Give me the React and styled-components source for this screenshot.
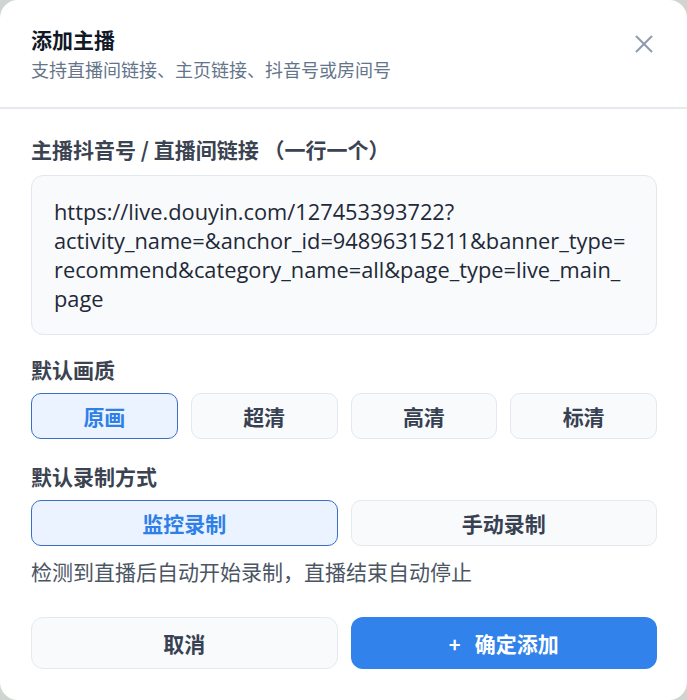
import React, { useState } from "react";
import styled, { createGlobalStyle } from "styled-components";

const Global = createGlobalStyle`
  html, body { margin: 0; padding: 0; background: #cfd6d2; }
  body { font-family: "Noto Sans CJK SC", "Noto Sans", sans-serif; }
  * { box-sizing: border-box; }
`;

const Card = styled.div`
  width: 687px;
  height: 700px;
  background: #ffffff;
  border-radius: 18px;
  overflow: hidden;
  display: flex;
  flex-direction: column;
`;

const Header = styled.div`
  display: flex;
  justify-content: space-between;
  align-items: flex-start;
  padding: 25px 34px 0 31px;
  height: 109px;
  flex-shrink: 0;
  border-bottom: 2px solid #e6e9ee;
`;

const HeaderText = styled.div`
  display: flex;
  flex-direction: column;
  gap: 4px;
`;

const Title = styled.div`
  font-size: 21px;
  font-weight: 700;
  color: #111827;
  line-height: 28px;
`;

const Subtitle = styled.div`
  font-size: 18px;
  color: #64748b;
  line-height: 24px;
`;

const CloseBtn = styled.button`
  border: none;
  background: none;
  padding: 0;
  margin-top: 10px;
  width: 18px;
  height: 18px;
  display: flex;
  align-items: center;
  justify-content: center;
  color: #8e9bab;
  cursor: pointer;
`;

const Body = styled.div`
  display: flex;
  flex-direction: column;
  padding: 27px 30px 0 31px;
`;

const Label = styled.div`
  font-size: 21px;
  font-weight: 700;
  color: #3b4351;
  line-height: 26px;
  margin-top: ${(p) => p.$mt || 0}px;
  margin-bottom: ${(p) => p.$mb || 11}px;
`;

const TextArea = styled.textarea`
  width: 100%;
  height: 160px;
  resize: none;
  background: #f8fafc;
  border: 1px solid #e2e8f0;
  border-radius: 12px;
  padding: 21px 24px 21px 22px;
  font-family: "Open Sans", "Noto Sans", sans-serif;
  font-size: 21.8px;
  line-height: 29px;
  color: #1f2937;
  outline: none;
  overflow: hidden;
`;

const Grid = styled.div`
  display: grid;
  grid-template-columns: repeat(${(p) => p.$cols}, 1fr);
  gap: 13px;
`;

const Option = styled.button`
  height: 46px;
  border-radius: 10px;
  font-family: "Noto Sans CJK SC", sans-serif;
  font-size: 21px;
  font-weight: 700;
  cursor: pointer;
  border: 1.5px solid ${(p) => (p.$active ? "#3a6fc6" : "#e5e9ef")};
  background: ${(p) => (p.$active ? "#eaf3ff" : "#f8fafc")};
  color: ${(p) => (p.$active ? "#2f7fe8" : "#374151")};
`;

const Helper = styled.div`
  font-size: 21px;
  color: #4b5563;
  line-height: 28px;
  margin-top: 11px;
`;

const Footer = styled.div`
  display: grid;
  grid-template-columns: 1fr 1fr;
  gap: 13px;
  margin-top: 32px;
`;

const FooterBtn = styled.button`
  height: 52px;
  border-radius: 12px;
  font-family: "Noto Sans CJK SC", sans-serif;
  font-size: 21px;
  font-weight: 700;
  cursor: pointer;
  display: flex;
  align-items: center;
  justify-content: center;
  gap: 14px;
  border: ${(p) => (p.$primary ? "none" : "1.5px solid #e5e9ef")};
  background: ${(p) => (p.$primary ? "#3182ea" : "#f8fafc")};
  color: ${(p) => (p.$primary ? "#ffffff" : "#374151")};
`;

const Plus = styled.span`
  font-size: 20px;
  font-weight: 700;
`;

const qualities = ["原画", "超清", "高清", "标清"];
const modes = ["监控录制", "手动录制"];

export default function App() {
  const [q, setQ] = useState(0);
  const [m, setM] = useState(0);
  const [text, setText] = useState(
    "https://live.douyin.com/127453393722?activity_name=&anchor_id=94896315211&banner_type=recommend&category_name=all&page_type=live_main_page"
  );
  return (
    <>
      <Global />
      <Card>
        <Header>
          <HeaderText>
            <Title>添加主播</Title>
            <Subtitle>支持直播间链接、主页链接、抖音号或房间号</Subtitle>
          </HeaderText>
          <CloseBtn aria-label="关闭">
            <svg width="18" height="18" viewBox="0 0 18 18" fill="none" stroke="currentColor" strokeWidth="2" strokeLinecap="round">
              <path d="M1.5 1.5 L16.5 16.5 M16.5 1.5 L1.5 16.5" />
            </svg>
          </CloseBtn>
        </Header>
        <Body>
          <Label $mb={13}>主播抖音号 / 直播间链接 （一行一个）</Label>
          <TextArea value={text} onChange={(e) => setText(e.target.value)} />
          <Label $mt={21}>默认画质</Label>
          <Grid $cols={4}>
            {qualities.map((x, i) => (
              <Option key={x} $active={q === i} onClick={() => setQ(i)}>{x}</Option>
            ))}
          </Grid>
          <Label $mt={24}>默认录制方式</Label>
          <Grid $cols={2}>
            {modes.map((x, i) => (
              <Option key={x} $active={m === i} onClick={() => setM(i)}>{x}</Option>
            ))}
          </Grid>
          <Helper>检测到直播后自动开始录制，直播结束自动停止</Helper>
          <Footer>
            <FooterBtn>取消</FooterBtn>
            <FooterBtn $primary>
              <Plus>+</Plus>
              <span>确定添加</span>
            </FooterBtn>
          </Footer>
        </Body>
      </Card>
    </>
  );
}
